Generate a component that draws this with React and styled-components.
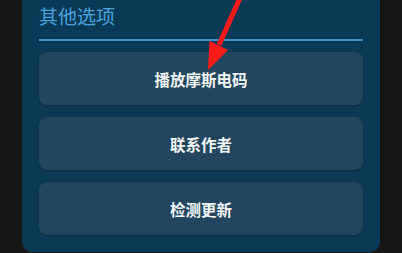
import React from "react";
import styled, { createGlobalStyle } from "styled-components";

const Global = createGlobalStyle`
  html, body { margin: 0; padding: 0; background: #161616; overflow: hidden; }
  body { font-family: "Noto Sans CJK SC", "Noto Sans", sans-serif; }
`;

const Page = styled.div`
  position: relative;
  width: 402px;
  height: 253px;
  padding: 0 22px 0 22px;
  box-sizing: border-box;
`;

const Panel = styled.section`
  background: #0b3a57;
  border-radius: 0 0 10px 10px;
  padding: 4px 17px 17px 17px;
  box-sizing: border-box;
  width: 358px;
`;

const Title = styled.h3`
  margin: 0;
  font-size: 19px;
  line-height: 24px;
  font-weight: 400;
  color: #4aa3df;
  padding-bottom: 11px;
  border-bottom: 2px solid #3f93c9;
`;

const List = styled.div`
  display: flex;
  flex-direction: column;
  gap: 12px;
  margin-top: 11px;
`;

const OptionButton = styled.button`
  height: 53px;
  border: none;
  border-radius: 8px;
  background: #22465f;
  color: #f4f6f8;
  font-family: "Noto Sans CJK SC", "Noto Sans", sans-serif;
  font-size: 15.5px;
  font-weight: 700;
  box-shadow: 0 1px 2px rgba(0, 0, 0, 0.25);
  cursor: pointer;
`;

const Arrow = styled.svg`
  position: absolute;
  left: 0;
  top: 0;
  pointer-events: none;
`;

export default function App() {
  return (
    <>
      <Global />
      <Page>
        <Panel>
          <Title>其他选项</Title>
          <List>
            <OptionButton>播放摩斯电码</OptionButton>
            <OptionButton>联系作者</OptionButton>
            <OptionButton>检测更新</OptionButton>
          </List>
        </Panel>
        <Arrow width="402" height="253" viewBox="0 0 402 253">
          <line x1="240" y1="-2" x2="219" y2="45" stroke="#ff1a1a" strokeWidth="5" />
          <polygon points="208,70 209.5,41 228,50" fill="#ff1a1a" />
        </Arrow>
      </Page>
    </>
  );
}
